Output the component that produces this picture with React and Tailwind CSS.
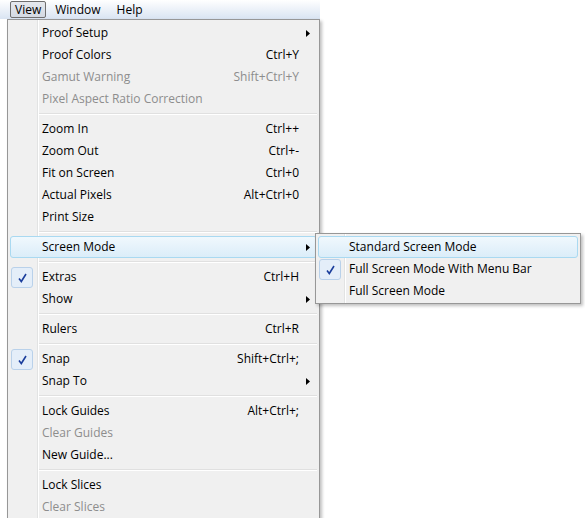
import React from 'react';

const font = { fontFamily: '"Open Sans", "Noto Sans", sans-serif' };

const mainItems = [
  { label: 'Proof Setup', sub: true },
  { label: 'Proof Colors', key: 'Ctrl+Y' },
  { label: 'Gamut Warning', key: 'Shift+Ctrl+Y', disabled: true },
  { label: 'Pixel Aspect Ratio Correction', disabled: true },
  { sep: true },
  { label: 'Zoom In', key: 'Ctrl++' },
  { label: 'Zoom Out', key: 'Ctrl+-' },
  { label: 'Fit on Screen', key: 'Ctrl+0' },
  { label: 'Actual Pixels', key: 'Alt+Ctrl+0' },
  { label: 'Print Size' },
  { sep: true },
  { label: 'Screen Mode', sub: true, active: true },
  { sep: true },
  { label: 'Extras', key: 'Ctrl+H', checked: true },
  { label: 'Show', sub: true },
  { sep: true },
  { label: 'Rulers', key: 'Ctrl+R' },
  { sep: true },
  { label: 'Snap', key: 'Shift+Ctrl+;', checked: true },
  { label: 'Snap To', sub: true },
  { sep: true },
  { label: 'Lock Guides', key: 'Alt+Ctrl+;' },
  { label: 'Clear Guides', disabled: true },
  { label: 'New Guide...' },
  { sep: true },
  { label: 'Lock Slices' },
  { label: 'Clear Slices', disabled: true },
];

const subItems = [
  { label: 'Standard Screen Mode', active: true },
  { label: 'Full Screen Mode With Menu Bar', checked: true },
  { label: 'Full Screen Mode' },
];

// checkmark inside the little blue box
const Check = () => (
  <div className="w-[22px] h-[21px] rounded-[3px] border border-[#b9d1ea] bg-[#e4eef9] flex items-center justify-center">
    <svg width="9" height="10" viewBox="0 0 9 10">
      <path d="M1 5.5 L3.3 8.5 L8 1" fill="none" stroke="#1b3e9c" strokeWidth="1.6" />
    </svg>
  </div>
);

const Arrow = () => (
  <svg width="4" height="7" viewBox="0 0 4 7">
    <path d="M0 0 L4 3.5 L0 7 Z" fill="#000" />
  </svg>
);

const MenuRow = ({ item, textLeft }) => {
  if (item.sep) {
    return (
      <div className="h-[8px] flex flex-col justify-center" style={{ paddingLeft: textLeft - 5 }}>
        <div className="h-px bg-[#e0e0e0] mr-[2px]" />
        <div className="h-px bg-white mr-[2px]" />
      </div>
    );
  }
  return (
    <div
      className={`relative h-[22px] mx-[2px] flex items-center rounded-[3px] border ${
        item.active
          ? 'border-[#a9d9f1] bg-gradient-to-b from-[#f0f8fd] to-[#dbedf9]'
          : 'border-transparent'
      }`}
    >
      <div className="absolute left-0 top-0">{item.checked && <Check />}</div>
      <span
        className={`text-[12px] leading-none ${item.disabled ? 'text-[#8d8d8d]' : 'text-black'}`}
        style={{ marginLeft: textLeft - 3 }}
      >
        {item.label}
      </span>
      <span className={`ml-auto text-[12px] leading-none ${item.disabled ? 'text-[#8d8d8d]' : 'text-black'}`}>
        {item.key}
      </span>
      <div className="w-[17px] flex justify-end pr-[6px]">{item.sub && <Arrow />}</div>
    </div>
  );
};

export default function App() {
  return (
    <div className="relative w-[585px] h-[518px] bg-white overflow-hidden" style={font}>
      {/* menu bar */}
      <div className="h-[19px] w-[320px] bg-gradient-to-b from-white to-[#d9e4f2] flex items-center text-[12px] text-black">
        <div className="ml-[10px] h-[17px] px-[4px] flex items-center rounded-[2px] border border-[#6f6f6f] bg-gradient-to-b from-[#e6e9ee] to-[#d3d9e2]">
          View
        </div>
        <span className="ml-[9px]">Window</span>
        <span className="ml-[16px]">Help</span>
      </div>

      {/* dropdown */}
      <div className="absolute left-[7px] top-[19px] w-[313px] h-[520px] border border-[#979797] bg-[#f0f0f0] pt-[2px] shadow-[2px_2px_3px_rgba(0,0,0,0.25)]">
        <div className="absolute left-[29px] top-0 bottom-0 w-px bg-[#e2e3e3]" />
        <div className="absolute left-[30px] top-0 bottom-0 w-px bg-white" />
        {mainItems.map((item, i) => (
          <MenuRow key={i} item={item} textLeft={34} />
        ))}
      </div>

      {/* submenu */}
      <div className="absolute left-[315px] top-[233px] w-[266px] border border-[#979797] bg-[#f0f0f0] pt-[2px] pb-[1px] shadow-[2px_2px_3px_rgba(0,0,0,0.25)]">
        <div className="absolute left-[28px] top-0 bottom-0 w-px bg-[#e2e3e3]" />
        <div className="absolute left-[29px] top-0 bottom-0 w-px bg-white" />
        {subItems.map((item, i) => (
          <MenuRow key={i} item={item} textLeft={33} />
        ))}
      </div>
    </div>
  );
}
